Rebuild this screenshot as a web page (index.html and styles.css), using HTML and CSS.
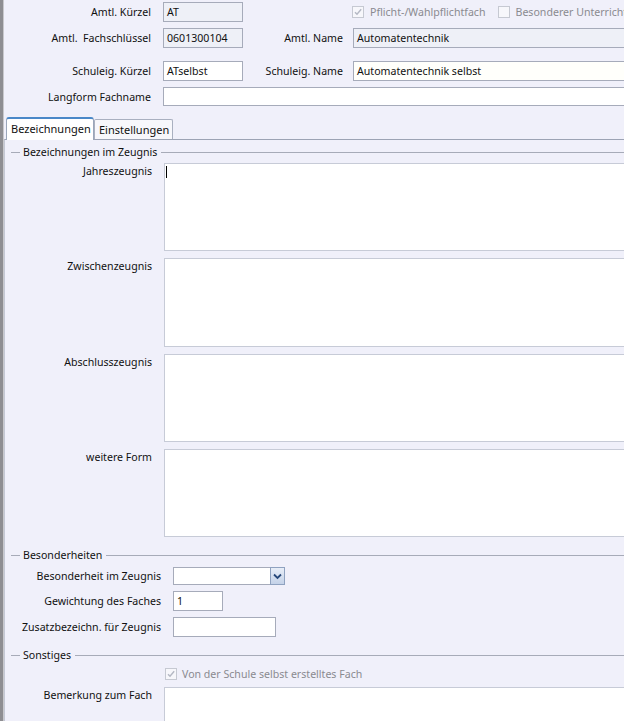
FILE: index.html
```html
<!DOCTYPE html>
<html lang="de">
<head>
<meta charset="utf-8">
<title>Fach</title>
<link rel="stylesheet" href="styles.css">
</head>
<body>
<div class="frame">
  <div class="top">
    <div class="row r1">
      <span class="lbl lbl1">Amtl. Kürzel</span>
      <div class="inp dis short">AT</div>
      <div class="checks">
        <span class="chk"><span class="box"><svg width="10" height="10" viewBox="0 0 10 10"><path d="M2 5.2 L4 7.3 L8.2 2.3" fill="none" stroke="#b4b8c4" stroke-width="1.4"/></svg></span>Pflicht-/Wahlpflichtfach</span>
        <span class="chk"><span class="box"></span>Besonderer Unterricht</span>
      </div>
    </div>
    <div class="row r2">
      <span class="lbl lbl1">Amtl.&nbsp; Fachschlüssel</span>
      <div class="inp dis short">0601300104</div>
      <span class="lbl lbl2">Amtl. Name</span>
      <div class="inp dis long">Automatentechnik</div>
    </div>
    <div class="row r3">
      <span class="lbl lbl1">Schuleig. Kürzel</span>
      <div class="inp short">ATselbst</div>
      <span class="lbl lbl2">Schuleig. Name</span>
      <div class="inp long ivory">Automatentechnik selbst</div>
    </div>
    <div class="row r4">
      <span class="lbl lbl1">Langform Fachname</span>
      <div class="inp long"></div>
    </div>
  </div>

  <div class="tabs">
    <div class="tab active">Bezeichnungen</div>
    <div class="tab">Einstellungen</div>
  </div>

  <div class="panel">
    <div class="legend">Bezeichnungen im Zeugnis</div>
    <div class="tagrid">
      <span class="talbl">Jahreszeugnis</span>
      <div class="ta"><span class="caret"></span></div>
      <span class="talbl">Zwischenzeugnis</span>
      <div class="ta"></div>
      <span class="talbl">Abschlusszeugnis</span>
      <div class="ta"></div>
      <span class="talbl">weitere Form</span>
      <div class="ta"></div>
    </div>

    <div class="legend sec">Besonderheiten</div>
    <div class="bgrid">
      <span class="blbl">Besonderheit im Zeugnis</span>
      <div class="combo">
        <div class="combo-field"></div>
        <div class="combo-btn"><svg width="9" height="7" viewBox="0 0 9 7"><path d="M1 1.5 L4.5 5 L8 1.5" fill="none" stroke="#27487a" stroke-width="1.8"/></svg></div>
      </div>
      <span class="blbl">Gewichtung des Faches</span>
      <div class="inp w50">1</div>
      <span class="blbl">Zusatzbezeichn. für Zeugnis</span>
      <div class="inp w103"></div>
    </div>

    <div class="legend sec">Sonstiges</div>
    <div class="checkrow">
      <span class="chk"><span class="box"><svg width="10" height="10" viewBox="0 0 10 10"><path d="M2 5.2 L4 7.3 L8.2 2.3" fill="none" stroke="#b4b8c4" stroke-width="1.4"/></svg></span>Von der Schule selbst erstelltes Fach</span>
    </div>
    <div class="tagrid bem">
      <span class="talbl">Bemerkung zum Fach</span>
      <div class="ta"></div>
    </div>
  </div>
</div>
</body>
</html>
```

FILE: styles.css
```css
html, body {
  margin: 0;
  padding: 0;
}
body {
  background: #f0f0fa;
  font-family: "Noto Sans", "Open Sans", sans-serif;
  font-size: 10.6px;
  color: #111111;
  width: 624px;
  height: 721px;
  overflow: hidden;
}
.frame {
  border-left: 3px solid #8e8e92;
  box-shadow: inset 1px 0 0 #c8c8cc;
  min-height: 721px;
  box-sizing: border-box;
}
.top {
  padding-top: 2px;
}
.row {
  display: flex;
  align-items: center;
  height: 20px;
}
.r1 { margin-bottom: 6px; }
.r2 { margin-bottom: 13px; }
.r3 { margin-bottom: 6px; }
.r4 { height: 19px; }
.lbl {
  text-align: right;
  white-space: nowrap;
  flex-shrink: 0;
}
.lbl1 {
  width: 148px;
  margin-right: 12px;
}
.lbl2 {
  width: 100px;
  margin-right: 10px;
}
.inp {
  height: 20px;
  box-sizing: border-box;
  border: 1px solid #a6abba;
  background: #ffffff;
  padding: 0 3px;
  line-height: 18px;
  white-space: nowrap;
  flex-shrink: 0;
}
.r4 .inp { height: 19px; line-height: 17px; }
.dis { background: #eef0f7; }
.ivory { background: #fffffb; }
.short { width: 80px; }
.long {
  flex: 1 1 auto;
  margin-right: -20px;
}
.checks {
  display: flex;
  align-items: center;
  gap: 12px;
  margin-left: 109px;
  white-space: nowrap;
  flex-shrink: 0;
}
.chk {
  display: inline-flex;
  align-items: center;
  color: #8a8a90;
  white-space: nowrap;
}
.box {
  width: 12px;
  height: 12px;
  box-sizing: border-box;
  border: 1px solid #c6c9d2;
  background: #f7f7fb;
  margin-right: 6px;
  display: inline-flex;
  align-items: center;
  justify-content: center;
}
.checkrow .box { margin-right: 5px; }
.tabs {
  display: flex;
  align-items: flex-end;
  height: 22px;
  margin-top: 11px;
  padding-left: 3px;
  position: relative;
  z-index: 1;
}
.tab {
  height: 20px;
  box-sizing: border-box;
  width: 79px;
  border: 1px solid #a9b0c0;
  border-bottom: none;
  border-radius: 2px 2px 0 0;
  background: #f7f7fb;
  padding-left: 4px;
  line-height: 20px;
  font-size: 11px;
  white-space: nowrap;
}
.tab.active {
  width: 88px;
  height: 23px;
  margin-bottom: -1px;
  background: #ffffff;
  border-color: #9aa6ba;
  border-top: 2px solid #4a88c8;
  border-radius: 3px 3px 0 0;
  line-height: 19px;
}
.panel {
  margin-left: 1px;
  border-left: 1px solid #c4c8d4;
  border-top: 1px solid #9ca3b4;
  padding-left: 6px;
}
.legend {
  display: flex;
  align-items: center;
  height: 14px;
  margin-top: 5px;
  white-space: nowrap;
}
.legend::before {
  content: "";
  width: 9px;
  height: 1px;
  background: #a7abb8;
  margin-right: 3px;
}
.legend::after {
  content: "";
  flex: 1;
  height: 1px;
  background: #a7abb8;
  margin-left: 4px;
}
.legend.sec { margin-top: 11px; }
.tagrid {
  display: grid;
  grid-template-columns: 141px 1fr;
  column-gap: 12px;
  row-gap: 7px;
  margin-top: 4px;
}
.talbl {
  text-align: right;
  padding-top: 1px;
  line-height: 14px;
  white-space: nowrap;
}
.ta {
  height: 88px;
  box-sizing: border-box;
  border: 1px solid #c7cbd7;
  background: #ffffff;
  margin-right: -20px;
  padding: 2px 0 0 1px;
}
.tagrid .ta:nth-of-type(2) { height: 89px; }
.caret {
  display: block;
  width: 1px;
  height: 12px;
  background: #000;
}
.bgrid {
  display: grid;
  grid-template-columns: 150px auto;
  column-gap: 12px;
  row-gap: 6px;
  margin-top: 5px;
  justify-content: start;
  align-items: center;
}
.blbl {
  text-align: right;
  white-space: nowrap;
}
.combo {
  display: flex;
  width: 112px;
  height: 18px;
}
.combo-field {
  flex: 1;
  border: 1px solid #a6abba;
  border-right: none;
  background: #fff;
}
.combo-btn {
  width: 15px;
  box-sizing: border-box;
  border: 1px solid #8fa2c0;
  background: linear-gradient(#e8eef8, #c4d2e8);
  display: flex;
  align-items: center;
  justify-content: center;
}
.w50 { width: 50px; }
.w103 { width: 103px; }
.checkrow {
  display: flex;
  align-items: center;
  height: 14px;
  margin-top: 5px;
  padding-left: 154px;
}
.bem {
  margin-top: 6px;
}
.bem .ta { height: 60px; }
```
